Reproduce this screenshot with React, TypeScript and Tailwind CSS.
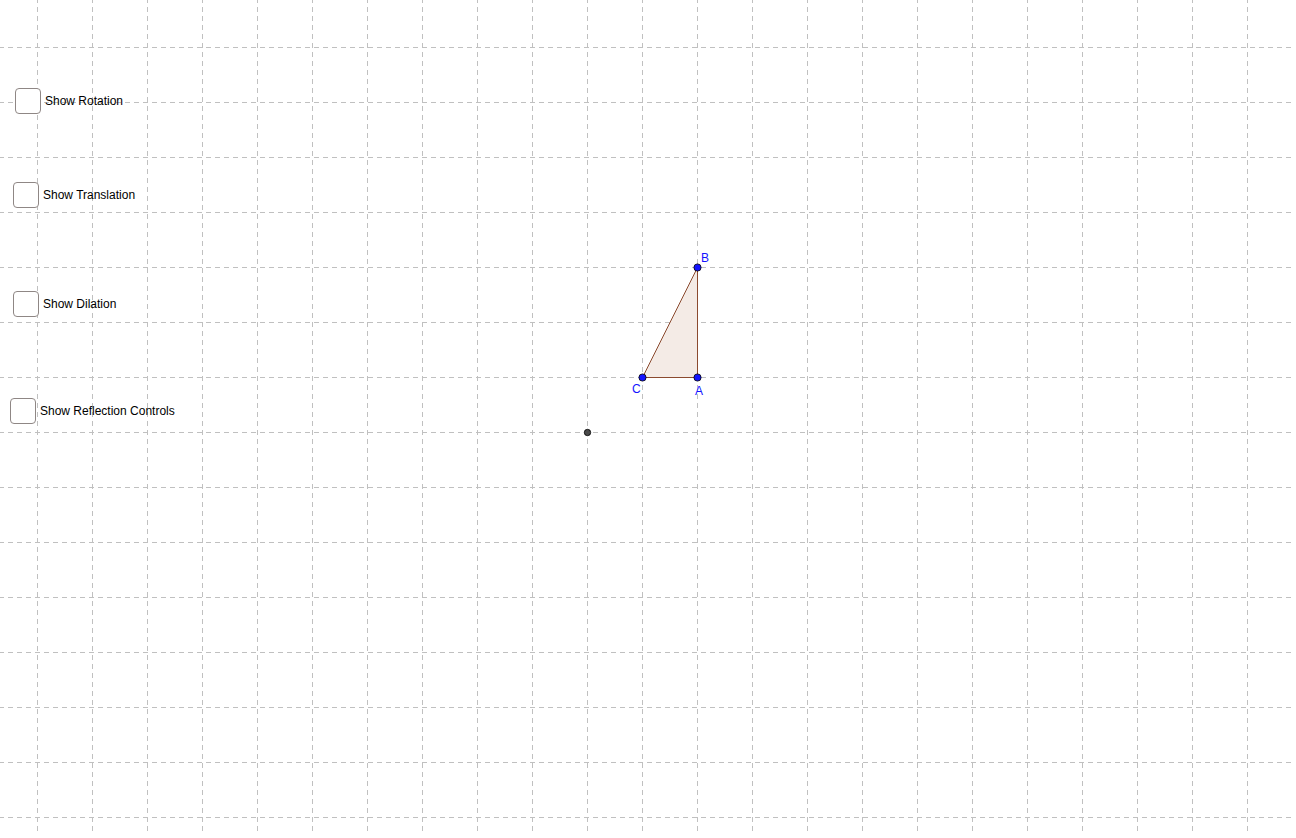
import React from "react";

const COLS = Array.from({ length: 23 }, (_, i) => 37 + i * 55);
const ROWS = Array.from({ length: 15 }, (_, i) => 47 + i * 55);

const toggles = [
  { label: "Show Rotation", x: 15, y: 88 },
  { label: "Show Translation", x: 13, y: 182 },
  { label: "Show Dilation", x: 13, y: 291 },
  { label: "Show Reflection Controls", x: 10, y: 398 },
];

function Grid() {
  return (
    <svg width="1296" height="838" className="block" xmlns="http://www.w3.org/2000/svg">
      {ROWS.map((y) => (
        <line key={`h${y}`} x1="0" x2="1293" y1={y + 0.5} y2={y + 0.5} stroke="#c0c0c0" strokeDasharray="5 4" strokeDashoffset="1" />
      ))}
      {COLS.map((x) => (
        <line key={`v${x}`} x1={x + 0.5} x2={x + 0.5} y1="0" y2="834" stroke="#c0c0c0" strokeDasharray="5 4" strokeDashoffset="2" />
      ))}

      {/* triangle ABC */}
      <polygon points="697.5,377.5 697.5,267.5 642.5,377.5" fill="#f4ebe6" stroke="#8b4a2f" strokeWidth="1" />

      {/* free point */}
      <circle cx="587.5" cy="432.5" r="3.2" fill="#4a4a4a" stroke="#000" strokeWidth="0.8" />

      {/* vertices */}
      {[
        [697.5, 377.5],
        [697.5, 267.5],
        [642.5, 377.5],
      ].map(([cx, cy]) => (
        <circle key={`${cx}-${cy}`} cx={cx} cy={cy} r="3.6" fill="#1414ff" stroke="#000" strokeWidth="0.8" />
      ))}

      <g fill="#1414ff" fontFamily="'Liberation Sans', Arial, sans-serif" fontSize="12">
        <text x="701" y="262">B</text>
        <text x="695" y="395">A</text>
        <text x="632" y="393">C</text>
      </g>
    </svg>
  );
}

export default function App() {
  return (
    <div className="relative w-[1296px] h-[838px] overflow-hidden bg-white font-['Liberation_Sans',Arial,sans-serif]">
      <Grid />
      {toggles.map((t) => (
        <label
          key={t.label}
          className="absolute flex items-center gap-[4px] cursor-pointer"
          style={{ left: t.x, top: t.y }}
        >
          <span className="w-[26px] h-[26px] rounded-[4px] border-[1.5px] border-[#8f8785] bg-white" />
          <span className="text-[12px] leading-none text-black">{t.label}</span>
        </label>
      ))}
    </div>
  );
}
